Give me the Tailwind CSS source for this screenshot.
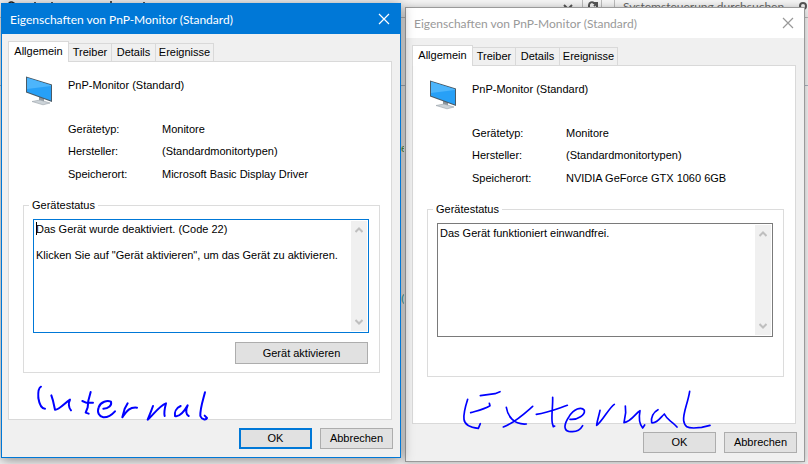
<!DOCTYPE html>
<html lang="de">
<head>
  <meta charset="UTF-8" />
  <meta name="viewport" content="width=device-width, initial-scale=1.0" />
  <title>Eigenschaften von PnP-Monitor (Standard)</title>
  <script src="https://cdn.jsdelivr.net/npm/@tailwindcss/browser@4"></script>
</head>
<body class="relative min-h-screen overflow-hidden bg-[#f4f4f4] font-['Liberation_Sans',sans-serif] text-[11px] leading-[13px] text-black">

  <!-- Explorer window behind the dialogs -->
  <div class="absolute inset-0 overflow-hidden text-[#666]" aria-hidden="true">
    <div class="flex h-[18px] justify-end border-b border-[#bbb] font-['Lato',sans-serif] text-[12px]">
      <div class="flex-1 pl-2">
        <svg class="h-1 w-40" viewBox="0 0 160 4" fill="none" stroke="#222" stroke-width="1.5"><path d="M1 4V3q2-2 5 0v1M27 2v2M44 2v2M103 1v3M136 2v2" /></svg>
      </div>
      <svg class="mt-1 mr-2 h-2 w-3" viewBox="0 0 12 8" fill="none" stroke="#555" stroke-width="2"><path d="M2 1l4 4 4-4" /></svg>
      <div class="w-5 border-x border-[#bbb] pl-1">
        <svg class="h-2 w-3" viewBox="0 0 12 8" fill="none" stroke="#555" stroke-width="2"><path d="M2 8V5a3 3 0 0 1 5-2M6 3h4v5M10 3L7 6" /></svg>
      </div>
      <div class="ml-3 flex w-[194px] justify-between border-l border-[#bbb] pl-2">
        <span>Systemsteuerung durchsuchen</span>
        <svg class="mr-px h-3 w-2" viewBox="0 0 8 12" fill="none" stroke="#555" stroke-width="2"><circle cx="4" cy="6" r="3" /></svg>
      </div>
    </div>
    <div class="h-[68px] border-b border-[#aab4c0]"></div>
  </div>

  <main class="relative flex items-start gap-1 pt-[3px] pr-[3px] pl-px">

    <!-- Dialog: internal monitor -->
    <section class="relative z-10 min-w-0 flex-1 border border-[#0078d7] bg-[#f0f0f0] shadow-[0_2px_12px_rgba(0,0,0,0.45)]">
      <header class="flex h-[30px] items-center justify-between bg-[#0078d7] pr-2.5 pl-2 text-white">
        <h1 class="font-['Lato',sans-serif] text-[12px]">Eigenschaften von PnP-Monitor (Standard)</h1>
        <button type="button" aria-label="Schließen">
          <svg class="size-3" viewBox="0 0 12 12" fill="none" stroke="currentColor" stroke-width="1.2"><path d="M1 1l10 10M11 1L1 11" /></svg>
        </button>
      </header>

      <div class="pt-[7px] pr-2 pl-1.5">
        <nav class="flex items-end" role="tablist">
          <button type="button" role="tab" aria-selected="true" class="relative z-10 -mb-px h-[21px] w-[61px] border border-b-0 border-[#d9d9d9] bg-white pb-0.5">Allgemein</button>
          <button type="button" role="tab" class="h-[18px] w-[43px] border-t border-r border-[#d9d9d9]">Treiber</button>
          <button type="button" role="tab" class="h-[18px] w-11 border-t border-r border-[#d9d9d9]">Details</button>
          <button type="button" role="tab" class="h-[18px] w-[58px] border-t border-r border-[#d9d9d9]">Ereignisse</button>
        </nav>

        <div class="border border-[#d9d9d9] bg-white pt-3.5 pr-[11px] pb-[46px] pl-3.5" role="tabpanel">
          <div class="flex gap-3.5 pl-0.5">
            <svg class="h-[30px] w-[29px] shrink-0" viewBox="0 0 29 30">
              <path d="M14 20l5 2v5l-5-1z" fill="#8d969d" />
              <path d="M7 25.500l8-1.500 10 3-7 1.800z" fill="#ccd3d8" stroke="#98a1a8" stroke-width=".6" />
              <path d="M1 .500l26 8v17.500L1 16.500z" fill="#4a5a66" />
              <path d="M2 1.700l24 7.500v15.200L2 15.800z" fill="#27a0f7" />
              <path d="M2 1.700l24 7.500v.8L2 13z" fill="#4db5fb" />
            </svg>
            <h2 class="pt-[3px]">PnP-Monitor (Standard)</h2>
          </div>
          <dl class="grid grid-cols-[94px_1fr] gap-y-[9px] pt-[17px] pl-[45px]">
            <dt>Gerätetyp:</dt><dd>Monitore</dd>
            <dt>Hersteller:</dt><dd>(Standardmonitortypen)</dd>
            <dt class="pt-px">Speicherort:</dt><dd class="pt-px">Microsoft Basic Display Driver</dd>
          </dl>

          <fieldset class="mt-[18px] border border-[#dcdcdc] pr-2.5 pb-2 pl-[9px]">
            <legend class="-ml-1 px-[3px]">Gerätestatus</legend>
            <div class="relative mt-[7px] flex h-[114px] border border-[#0078d7] bg-white p-px">
              <textarea readonly aria-label="Gerätestatus" class="min-w-0 flex-1 resize-none overflow-hidden pt-0.5 pl-px outline-none">Das Gerät wurde deaktiviert. (Code 22)

Klicken Sie auf "Gerät aktivieren", um das Gerät zu aktivieren.</textarea>
              <span class="absolute top-0.5 left-0.5 h-[13px] w-px bg-black"></span>
              <div class="flex w-4 flex-col items-center justify-between bg-[#f0f0f0] py-1.5" aria-hidden="true">
                <svg class="h-1.5 w-2" viewBox="0 0 8 6" fill="none" stroke="#bfbfbf" stroke-width="2"><path d="M.5 5L4 1.500 7.500 5" /></svg>
                <svg class="h-1.5 w-2" viewBox="0 0 8 6" fill="none" stroke="#bfbfbf" stroke-width="2"><path d="M.5 1L4 4.500 7.500 1" /></svg>
              </div>
            </div>
            <div class="flex justify-end pt-[9px] pr-px">
              <button type="button" class="h-[22px] w-[133px] border border-[#adadad] bg-[#e1e1e1]">Gerät aktivieren</button>
            </div>
          </fieldset>
        </div>
      </div>

      <footer class="flex justify-end gap-2 py-2 pr-[7px]">
        <button type="button" class="h-[21px] w-[73px] border-2 border-[#0078d7] bg-[#e1e1e1]">OK</button>
        <button type="button" class="h-[21px] w-[73px] border border-[#adadad] bg-[#e1e1e1]">Abbrechen</button>
      </footer>

      <!-- Pen note: Internal -->
      <svg class="pointer-events-none absolute bottom-[-7px] left-[18px] h-[94px] w-[200px]" viewBox="0 0 600 282" fill="none" stroke="#00f" stroke-width="6" stroke-linecap="round" stroke-linejoin="round" role="img" aria-label="Internal">
        <path d="M63 50C54 54 54 68 55 84C58 102 64 116 75 116" />
        <path d="M94 76L99 92 105 119C116 121 135 98 150 89C145 98 145 112 153 121" />
        <path d="M212 66L205 92 203 112 197 128 206 131M187 93L198 98 219 98" />
        <path d="M250 116C266 116 276 106 273 95C262 91 242 94 236 112C230 128 238 140 250 142C266 143 276 134 285 124" />
        <path d="M323 100L314 116 307 142C318 127 327 110 351 113" />
        <path d="M399 108L393 124 383 149C398 137 417 108 438 100C434 115 431 126 434 138" />
        <path d="M482 108C468 114 463 127 465 138C480 142 494 122 503 106C496 121 498 134 506 138" />
        <path d="M555 67C548 94 540 116 541 138C545 149 558 151 561 144L554 137" />
      </svg>

      <!-- Explorer links showing between the dialogs -->
      <span class="absolute top-[138px] left-full w-1 overflow-hidden pl-px text-[#2f6b2f]" aria-hidden="true">el</span>
      <span class="absolute top-[288px] left-full w-1 overflow-hidden pl-px text-[#1f7a7a]" aria-hidden="true">(V</span>
    </section>

    <!-- Dialog: external monitor -->
    <section class="relative mt-1 min-w-0 flex-1 border border-[#9a9a9a] bg-[#f0f0f0] shadow-[0_1px_8px_rgba(0,0,0,0.3)]">
      <header class="flex h-[30px] items-center justify-between bg-white pr-2.5 pl-2 text-[#999]">
        <h1 class="font-['Lato',sans-serif] text-[12px]">Eigenschaften von PnP-Monitor (Standard)</h1>
        <button type="button" aria-label="Schließen">
          <svg class="size-3" viewBox="0 0 12 12" fill="none" stroke="currentColor" stroke-width="1.2"><path d="M1 1l10 10M11 1L1 11" /></svg>
        </button>
      </header>

      <div class="pt-[7px] pr-2 pl-1.5">
        <nav class="flex items-end" role="tablist">
          <button type="button" role="tab" aria-selected="true" class="relative z-10 -mb-px h-[21px] w-[61px] border border-b-0 border-[#d9d9d9] bg-white pb-0.5">Allgemein</button>
          <button type="button" role="tab" class="h-[18px] w-[43px] border-t border-r border-[#d9d9d9]">Treiber</button>
          <button type="button" role="tab" class="h-[18px] w-11 border-t border-r border-[#d9d9d9]">Details</button>
          <button type="button" role="tab" class="h-[18px] w-[58px] border-t border-r border-[#d9d9d9]">Ereignisse</button>
        </nav>

        <div class="border border-[#d9d9d9] bg-white pt-3.5 pr-[11px] pb-[46px] pl-3.5" role="tabpanel">
          <div class="flex gap-3.5 pl-0.5">
            <svg class="h-[30px] w-[29px] shrink-0" viewBox="0 0 29 30">
              <path d="M14 20l5 2v5l-5-1z" fill="#8d969d" />
              <path d="M7 25.500l8-1.500 10 3-7 1.800z" fill="#ccd3d8" stroke="#98a1a8" stroke-width=".6" />
              <path d="M1 .500l26 8v17.500L1 16.500z" fill="#4a5a66" />
              <path d="M2 1.700l24 7.500v15.200L2 15.800z" fill="#27a0f7" />
              <path d="M2 1.700l24 7.500v.8L2 13z" fill="#4db5fb" />
            </svg>
            <h2 class="pt-[3px]">PnP-Monitor (Standard)</h2>
          </div>
          <dl class="grid grid-cols-[94px_1fr] gap-y-[9px] pt-[17px] pl-[45px]">
            <dt>Gerätetyp:</dt><dd>Monitore</dd>
            <dt>Hersteller:</dt><dd>(Standardmonitortypen)</dd>
            <dt class="pt-px">Speicherort:</dt><dd class="pt-px">NVIDIA GeForce GTX 1060 6GB</dd>
          </dl>

          <fieldset class="mt-[18px] border border-[#dcdcdc] pr-2.5 pb-[39px] pl-[9px]">
            <legend class="-ml-1 px-[3px]">Gerätestatus</legend>
            <div class="mt-[7px] flex h-[114px] border border-[#7a7a7a] bg-white p-px">
              <textarea readonly aria-label="Gerätestatus" class="min-w-0 flex-1 resize-none overflow-hidden pt-0.5 pl-px outline-none">Das Gerät funktioniert einwandfrei.</textarea>
              <div class="flex w-4 flex-col items-center justify-between bg-[#f0f0f0] py-1.5" aria-hidden="true">
                <svg class="h-1.5 w-2" viewBox="0 0 8 6" fill="none" stroke="#bfbfbf" stroke-width="2"><path d="M.5 5L4 1.500 7.500 5" /></svg>
                <svg class="h-1.5 w-2" viewBox="0 0 8 6" fill="none" stroke="#bfbfbf" stroke-width="2"><path d="M.5 1L4 4.500 7.500 1" /></svg>
              </div>
            </div>
          </fieldset>
        </div>
      </div>

      <footer class="flex justify-end gap-2 py-2 pr-[7px]">
        <button type="button" class="h-[21px] w-[73px] border border-[#adadad] bg-[#e1e1e1]">OK</button>
        <button type="button" class="h-[21px] w-[73px] border border-[#adadad] bg-[#e1e1e1]">Abbrechen</button>
      </footer>

      <!-- Pen note: External -->
      <svg class="pointer-events-none absolute bottom-[-3px] left-[34px] h-[94px] w-[280px]" viewBox="0 0 840 282" fill="none" stroke="#00f" stroke-width="5" stroke-linecap="round" stroke-linejoin="round" role="img" aria-label="External">
        <path d="M83 88C76 110 70 132 72 148C74 166 90 172 115 175L121 161M121 77L165 71 180 65M92 128C112 122 132 118 150 107L148 100" />
        <path d="M199 112C203 137 220 165 259 162M278 109C254 130 225 158 190 171" />
        <path d="M338 82C339 110 333 142 337 160L340 170 344 168M289 133C325 128 352 116 382 106" />
        <path d="M390 148C414 150 436 134 433 121C424 108 401 117 387 140C372 162 370 180 386 184C407 188 421 180 428 167" />
        <path d="M480 121C477 137 471 153 470 166C486 156 507 113 523 103" />
        <path d="M556 108L557 128 552 158C574 155 587 129 600 122C596 144 600 165 608 174L614 165" />
        <path d="M654 119C640 126 632 143 635 158C650 162 662 142 673 132C684 154 692 149 711 171" />
        <path d="M749 64C744 98 728 130 731 152C734 171 743 174 761 174L785 172 810 166" />
      </svg>
    </section>
  </main>
</body>
</html>
